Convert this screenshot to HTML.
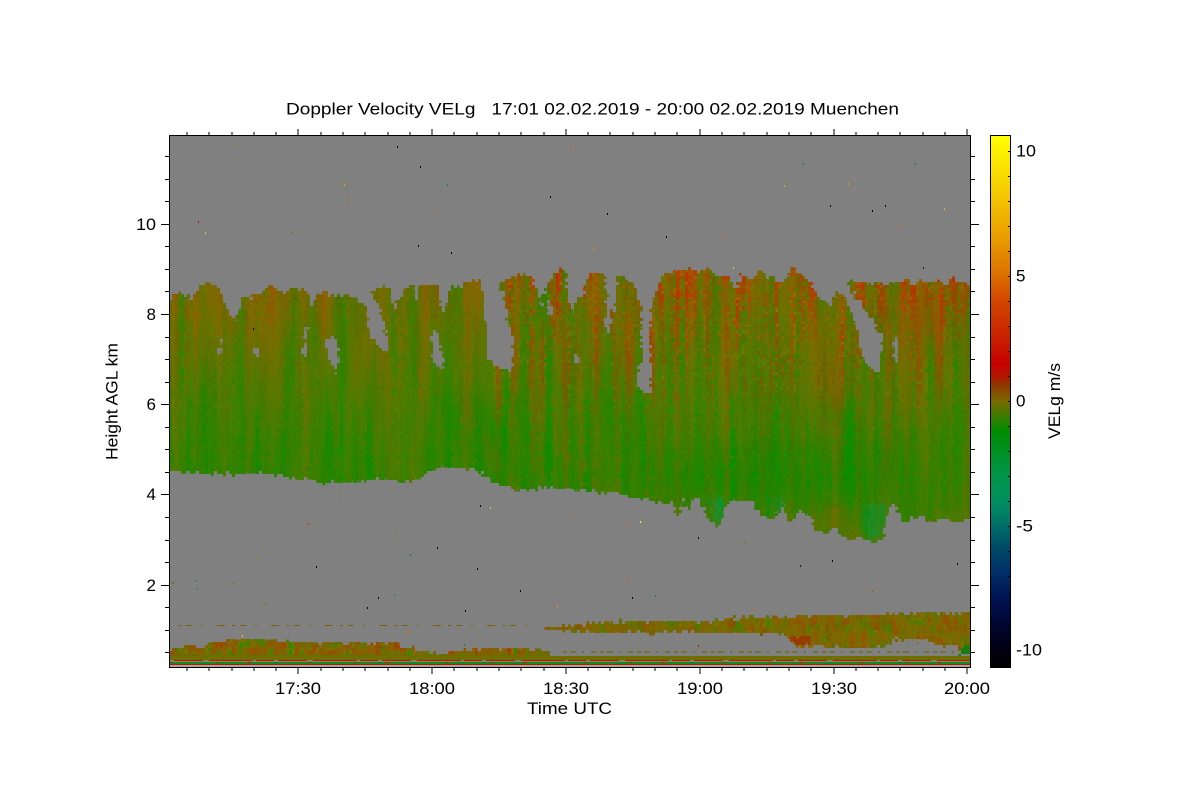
<!DOCTYPE html>
<html><head><meta charset="utf-8"><title>Doppler Velocity VELg</title>
<style>html,body{margin:0;padding:0;background:#fff;width:1200px;height:800px;overflow:hidden}svg{display:block}
text{font-family:"Liberation Sans",sans-serif;font-size:17px;fill:#000}</style></head>
<body>
<svg width="1200" height="800" viewBox="0 0 1200 800" xmlns="http://www.w3.org/2000/svg">
<defs>
<linearGradient id="base" gradientUnits="userSpaceOnUse" x1="0" y1="265" x2="0" y2="545">
<stop offset="0" stop-color="#846400"/><stop offset=".16" stop-color="#786c00"/><stop offset=".4" stop-color="#5e7800"/>
<stop offset=".62" stop-color="#448000"/><stop offset=".78" stop-color="#3e8000"/><stop offset=".9" stop-color="#587800"/><stop offset="1" stop-color="#6e7000"/>
</linearGradient>
<linearGradient id="topm" gradientUnits="userSpaceOnUse" x1="0" y1="270" x2="0" y2="520">
<stop offset="0" stop-color="#fff"/><stop offset=".3" stop-color="#999"/><stop offset=".6" stop-color="#333"/><stop offset="1" stop-color="#222"/>
</linearGradient>
<linearGradient id="botm" gradientUnits="userSpaceOnUse" x1="0" y1="270" x2="0" y2="520">
<stop offset="0" stop-color="#888"/><stop offset=".4" stop-color="#ccc"/><stop offset=".75" stop-color="#fff"/><stop offset="1" stop-color="#ddd"/>
</linearGradient>
<mask id="mt" maskUnits="userSpaceOnUse" x="160" y="135" width="820" height="533"><rect x="160" y="135" width="820" height="533" fill="url(#topm)"/></mask>
<mask id="mb" maskUnits="userSpaceOnUse" x="160" y="135" width="820" height="533"><rect x="160" y="135" width="820" height="533" fill="url(#botm)"/></mask>
<linearGradient id="cb" gradientUnits="userSpaceOnUse" x1="0" y1="135" x2="0" y2="667">
<stop offset="0" stop-color="#ffff00"/>
<stop offset=".113" stop-color="#f5c800"/>
<stop offset=".2" stop-color="#e89800"/>
<stop offset=".265" stop-color="#dc6e00"/>
<stop offset=".31" stop-color="#d24800"/>
<stop offset=".385" stop-color="#c81e00"/>
<stop offset=".43" stop-color="#c80000"/>
<stop offset=".455" stop-color="#b01800"/>
<stop offset=".47" stop-color="#903800"/>
<stop offset=".5" stop-color="#7a6a00"/>
<stop offset=".556" stop-color="#008c00"/>
<stop offset=".63" stop-color="#009440"/>
<stop offset=".688" stop-color="#009060"/>
<stop offset=".735" stop-color="#006e68"/>
<stop offset=".77" stop-color="#004e68"/>
<stop offset=".82" stop-color="#003068"/>
<stop offset=".875" stop-color="#001050"/>
<stop offset=".91" stop-color="#000838"/>
<stop offset=".97" stop-color="#000010"/>
<stop offset="1" stop-color="#000000"/>
</linearGradient>
<filter id="fg1" x="0" y="0" width="100%" height="100%" color-interpolation-filters="sRGB">
<feTurbulence type="fractalNoise" baseFrequency="0.11 0.005" numOctaves="3" seed="7"/>
<feColorMatrix values="0 0 0 0 0  0 0 0 0 .56  0 0 0 0 0  0 0 0 2.8 -1.05"/>
</filter>
<filter id="fg2" x="0" y="0" width="100%" height="100%" color-interpolation-filters="sRGB">
<feTurbulence type="fractalNoise" baseFrequency="0.03 0.004" numOctaves="2" seed="14"/>
<feColorMatrix values="0 0 0 0 0  0 0 0 0 .56  0 0 0 0 0  0 0 0 2.4 -1.0"/>
</filter>
<filter id="fr1" x="0" y="0" width="100%" height="100%" color-interpolation-filters="sRGB">
<feTurbulence type="fractalNoise" baseFrequency="0.2 0.006" numOctaves="3" seed="23"/>
<feColorMatrix values="0 0 0 0 .76  0 0 0 0 .16  0 0 0 0 0  0 0 0 3.4 -1.45"/>
</filter>
<filter id="fr2" x="0" y="0" width="100%" height="100%" color-interpolation-filters="sRGB">
<feTurbulence type="fractalNoise" baseFrequency="0.13 0.006" numOctaves="3" seed="41"/>
<feColorMatrix values="0 0 0 0 .56  0 0 0 0 .42  0 0 0 0 0  0 0 0 2.4 -1.0"/>
</filter>
<filter id="low" x="0" y="0" width="100%" height="100%" color-interpolation-filters="sRGB">
<feTurbulence type="fractalNoise" baseFrequency="0.16 0.06" numOctaves="3" seed="11"/>
<feColorMatrix values="0 0 0 0 .2  0 0 0 0 .52  0 0 0 0 0  0 0 0 4 -1.85"/>
</filter>
<filter id="low2" x="0" y="0" width="100%" height="100%" color-interpolation-filters="sRGB">
<feTurbulence type="fractalNoise" baseFrequency="0.16 0.06" numOctaves="3" seed="5"/>
<feColorMatrix values="0 0 0 0 .62  0 0 0 0 .26  0 0 0 0 0  0 0 0 4 -1.85"/>
</filter>
<filter id="rough" x="-2%" y="-2%" width="104%" height="104%" color-interpolation-filters="sRGB">
<feTurbulence type="fractalNoise" baseFrequency="0.22" numOctaves="2" seed="3" result="n"/>
<feDisplacementMap in="SourceGraphic" in2="n" scale="9" xChannelSelector="R" yChannelSelector="A"/>
</filter>
<filter id="px" filterUnits="userSpaceOnUse" x="169" y="135" width="803" height="534" color-interpolation-filters="sRGB">
<feComponentTransfer in="SourceGraphic" result="s"><feFuncA type="discrete" tableValues="0 1"/></feComponentTransfer>
<feFlood x="170" y="136" width="1" height="1" flood-color="#000"/>
<feComposite x="169" y="135" width="3" height="3"/>
<feTile result="a"/>
<feComposite in="s" in2="a" operator="in"/>
<feMorphology operator="dilate" radius="1"/>
</filter>
<filter id="bl" x="-30%" y="-30%" width="160%" height="160%"><feGaussianBlur stdDeviation="14"/></filter>
<filter id="bl5" x="-30%" y="-30%" width="160%" height="160%"><feGaussianBlur stdDeviation="5"/></filter>
<filter id="bl3" x="-30%" y="-30%" width="160%" height="160%"><feGaussianBlur stdDeviation="2.5"/></filter>
<clipPath id="plot"><rect x="170" y="136" width="800" height="531"/></clipPath>
<clipPath id="cl"><polygon points="160,302 170,302 173,297 183,293 190,301 201,285 207,283 220,288 225,303 232,320 237,320 243,297 250,299 257,293 262,296 267,285 277,290 284,294 290,291 294,287 300,291 307,290 313,307 317,293 327,293 333,297 343,295 353,295 360,303 365,307 367,325 373,340 383,350 390,350 385,327 378,305 372,293 383,285 390,290 393,317 397,300 407,288 413,283 417,303 420,287 425,283 437,285 440,310 445,312 448,300 450,285 460,288 465,285 475,277 482,290 485,315 487,360 500,367 512,372 514,340 505,300 500,283 510,278 520,275 530,275 537,290 541,310 545,290 550,280 560,270 565,270 568,293 573,317 575,297 582,298 585,283 590,274 598,273 605,277 607,297 610,303 615,313 617,277 623,275 628,283 633,283 640,303 642,363 637,367 638,387 645,393 651,393 652,367 650,327 655,293 663,275 677,272 690,268 700,272 710,268 717,277 727,277 737,290 742,275 752,280 760,270 767,280 773,277 782,285 793,270 807,278 818,297 827,303 832,310 837,292 845,297 853,317 860,343 865,365 880,372 883,337 868,312 853,293 845,278 855,283 863,281 870,285 876,280 882,287 888,281 897,284 907,280 915,286 920,279 928,284 937,280 945,285 953,279 962,284 985,281 985,523 965,518 952,523 948,517 927,522 922,515 903,523 898,507 890,505 885,523 882,540 872,542 860,537 847,540 833,527 827,532 813,532 813,520 797,508 793,522 787,520 783,500 775,520 767,517 760,513 753,500 737,500 730,500 718,527 707,517 702,500 692,498 687,512 683,498 677,517 673,503 657,502 640,497 603,492 560,488 520,490 493,482 480,472 473,470 447,466 427,470 420,477 410,482 373,477 360,482 320,482 293,477 260,473 203,473 170,471 160,471"/></clipPath>
<clipPath id="lowL"><polygon points="160,648 170,648 200,647 220,642 250,639 293,642 347,643 393,643 407,647 423,652 443,655 467,650 493,649 527,649 550,652 553,657 553,660 160,660"/></clipPath>
<clipPath id="lowR"><polygon points="543,629 560,627 593,623 627,622 660,621 710,622 753,617 793,617 837,616 877,615 917,613 985,614 985,655 960,655 958,647 927,643 893,642 873,648 860,647 827,647 793,645 790,638 780,633 747,633 713,633 687,631 643,632 603,632 560,631"/></clipPath>
</defs>
<rect width="1200" height="800" fill="#fff"/>
<rect x="170" y="136" width="800" height="531" fill="#808080"/>
<g clip-path="url(#plot)">
<g filter="url(#px)">
<g filter="url(#rough)">
<g clip-path="url(#cl)">
<rect x="160" y="260" width="825" height="290" fill="url(#base)"/>
<ellipse cx="770" cy="478" rx="130" ry="26" fill="#0c8c00" opacity=".75" filter="url(#bl)"/>
<ellipse cx="625" cy="440" rx="30" ry="70" fill="#088c00" opacity=".45" filter="url(#bl)"/>
<ellipse cx="500" cy="455" rx="30" ry="40" fill="#0a8c00" opacity=".5" filter="url(#bl)"/>
<ellipse cx="205" cy="415" rx="18" ry="50" fill="#0a8c00" opacity=".4" filter="url(#bl)"/>
<ellipse cx="910" cy="320" rx="60" ry="30" fill="#a04800" opacity=".35" filter="url(#bl)"/>
<ellipse cx="860" cy="400" rx="70" ry="30" fill="#806800" opacity=".4" filter="url(#bl)"/>
<path d="M443 393L477 460M470 395L520 480M505 390L560 480M600 395L650 470M820 400L900 470" stroke="#0a8c00" stroke-width="12" fill="none" opacity=".4" filter="url(#bl5)"/>
<path d="M458 395L500 470M535 400L585 480" stroke="#7a6800" stroke-width="10" fill="none" opacity=".5" filter="url(#bl5)"/>
<polygon points="706,498 727,497 725,515 719,527 712,520 708,510" fill="#0a9430" filter="url(#bl3)"/>
<polygon points="860,505 886,503 884,525 880,540 870,540 862,525" fill="#0a9430" filter="url(#bl3)"/>
<polygon points="765,498 785,497 780,518 770,518" fill="#0a9020" opacity=".8" filter="url(#bl3)"/>
<polygon points="825,505 848,505 846,530 830,528" fill="#8a6200" opacity=".6" filter="url(#bl3)"/>
<rect x="160" y="260" width="825" height="290" filter="url(#fg2)" opacity=".6"/>
<rect x="160" y="260" width="825" height="290" filter="url(#fg1)" mask="url(#mb)" opacity=".75"/>
<g mask="url(#mt)">
<rect x="160" y="260" width="330" height="290" filter="url(#fr1)" opacity=".35"/>
<rect x="490" y="260" width="495" height="290" filter="url(#fr1)"/>
</g>
<rect x="160" y="260" width="825" height="290" filter="url(#fr2)" opacity=".45"/>
</g>
<polygon points="575,353 578,353 578,363 575,363" fill="#808080"/>
<polygon points="893,340 898,338 897,363 894,360" fill="#808080"/>
<polygon points="218,340 221,340 220,354 218,352" fill="#808080"/>
<polygon points="254,347 260,348 258,358 254,356" fill="#808080"/>
<polygon points="303,345 306,346 305,360 303,358" fill="#808080"/>
<polygon points="326,340 332,336 334,358 328,360" fill="#808080"/>
<polygon points="305,325 307,325 307,338 305,336" fill="#808080"/>
<polygon points="332,335 338,340 336,372 330,360" fill="#808080"/>
<polygon points="431,332 438,331 440,350 444,368 436,367 433,352" fill="#808080"/>
<polygon points="548,298 552,298 550,320" fill="#808080"/>
<polygon points="606,302 610,302 610,330 606,335" fill="#808080"/>
</g>
<g filter="url(#rough)">
<g clip-path="url(#lowL)">
<rect x="160" y="636" width="400" height="26" fill="#826200"/>
<rect x="160" y="636" width="400" height="26" filter="url(#low)"/>
<rect x="160" y="636" width="400" height="26" filter="url(#low2)"/>
</g>
<g clip-path="url(#lowR)">
<rect x="540" y="612" width="445" height="46" fill="#7c6800"/>
<rect x="540" y="612" width="445" height="46" filter="url(#low)" opacity=".75"/>
<rect x="540" y="612" width="445" height="46" filter="url(#low2)" opacity=".65"/>
<rect x="960" y="645" width="11" height="11" fill="#1c7c10"/>
<rect x="892" y="640" width="36" height="3" fill="#808080"/>
<rect x="790" y="636" width="22" height="9" fill="#963c00"/>
</g>
</g>
</g>
<rect x="170" y="656" width="800" height="4" fill="#706e00"/>
<rect x="170" y="654" width="380" height="2" fill="#6e6c00" opacity=".7"/>
<rect x="170" y="660" width="800" height="1" fill="#c01800"/>
<rect x="170" y="661" width="800" height="1" fill="#8c8660"/>
<rect x="170" y="662" width="800" height="2" fill="#108a28"/>
<rect x="170" y="664" width="800" height="1" fill="#b81c00"/>
<rect x="170" y="665" width="800" height="2" fill="#a4a4a0"/>
<line x1="170" y1="662.5" x2="970" y2="662.5" stroke="#b81c00" stroke-width="1" stroke-dasharray="3 43 2 29 4 57"/>
<line x1="170" y1="660.5" x2="970" y2="660.5" stroke="#808080" stroke-width="1" stroke-dasharray="4 29 6 44 3 18"/>
<line x1="178" y1="625.5" x2="540" y2="625.5" stroke="#7a6200" stroke-width="1" stroke-dasharray="3 5 6 9 2 14 8 7"/>
<line x1="563" y1="652" x2="960" y2="652" stroke="#6c6a00" stroke-width="1.2" stroke-dasharray="4 3 6 6 2 7 5 4"/>
<g shape-rendering="crispEdges">
<rect x="198" y="221" width="1" height="2" fill="#c00"/><rect x="205" y="232" width="1" height="2" fill="#ec0"/>
<rect x="236" y="145" width="1" height="2" fill="#b90"/><rect x="292" y="232" width="1" height="2" fill="#860"/>
<rect x="344" y="184" width="1" height="2" fill="#e90"/><rect x="348" y="199" width="1" height="2" fill="#a50"/>
<rect x="420" y="166" width="1" height="2" fill="#000"/><rect x="437" y="210" width="1" height="2" fill="#d70"/>
<rect x="447" y="184" width="1" height="2" fill="#086"/><rect x="397" y="146" width="1" height="2" fill="#000"/>
<rect x="418" y="245" width="1" height="2" fill="#000"/><rect x="451" y="252" width="1" height="2" fill="#000"/>
<rect x="550" y="196" width="1" height="2" fill="#000"/><rect x="573" y="146" width="1" height="2" fill="#e80"/>
<rect x="593" y="248" width="1" height="2" fill="#e80"/><rect x="607" y="213" width="1" height="2" fill="#001"/>
<rect x="666" y="236" width="1" height="2" fill="#000"/><rect x="722" y="235" width="1" height="2" fill="#d60"/>
<rect x="733" y="267" width="1" height="2" fill="#ec0"/><rect x="784" y="185" width="1" height="2" fill="#da0"/>
<rect x="830" y="205" width="1" height="2" fill="#000"/><rect x="848" y="183" width="1" height="2" fill="#e90"/>
<rect x="872" y="210" width="1" height="2" fill="#000"/><rect x="885" y="205" width="1" height="2" fill="#000"/>
<rect x="900" y="225" width="1" height="2" fill="#d60"/><rect x="915" y="163" width="1" height="2" fill="#076"/>
<rect x="803" y="163" width="1" height="2" fill="#076"/><rect x="944" y="208" width="1" height="2" fill="#eb0"/>
<rect x="923" y="267" width="1" height="2" fill="#024"/><rect x="253" y="328" width="1" height="2" fill="#000"/>
<rect x="340" y="495" width="1" height="2" fill="#860"/><rect x="308" y="523" width="1" height="2" fill="#c30"/>
<rect x="395" y="533" width="1" height="2" fill="#a70"/><rect x="437" y="547" width="1" height="2" fill="#000"/>
<rect x="480" y="505" width="1" height="2" fill="#000"/><rect x="490" y="507" width="1" height="2" fill="#ec0"/>
<rect x="640" y="521" width="1" height="2" fill="#ff0"/><rect x="626" y="524" width="1" height="2" fill="#d60"/>
<rect x="573" y="515" width="1" height="2" fill="#d80"/><rect x="257" y="557" width="1" height="2" fill="#a70"/>
<rect x="195" y="580" width="1" height="2" fill="#086"/><rect x="197" y="588" width="1" height="2" fill="#086"/>
<rect x="233" y="582" width="1" height="2" fill="#670"/><rect x="172" y="582" width="2" height="2" fill="#770"/>
<rect x="265" y="603" width="1" height="2" fill="#860"/><rect x="316" y="566" width="1" height="2" fill="#000"/>
<rect x="367" y="607" width="1" height="2" fill="#000"/><rect x="378" y="597" width="1" height="2" fill="#000"/>
<rect x="394" y="594" width="1" height="2" fill="#086"/><rect x="410" y="554" width="1" height="2" fill="#076"/>
<rect x="465" y="610" width="1" height="2" fill="#000"/><rect x="477" y="568" width="1" height="2" fill="#000"/>
<rect x="520" y="590" width="1" height="2" fill="#000"/><rect x="557" y="605" width="1" height="2" fill="#e90"/>
<rect x="632" y="597" width="1" height="2" fill="#000"/><rect x="628" y="578" width="1" height="2" fill="#d50"/>
<rect x="655" y="595" width="1" height="2" fill="#086"/><rect x="698" y="537" width="1" height="2" fill="#000"/>
<rect x="832" y="560" width="1" height="2" fill="#000"/><rect x="872" y="590" width="1" height="2" fill="#a50"/>
<rect x="957" y="563" width="1" height="2" fill="#000"/><rect x="745" y="542" width="1" height="2" fill="#860"/>
<rect x="800" y="565" width="1" height="2" fill="#024"/><rect x="752" y="608" width="1" height="2" fill="#d60"/>
<rect x="242" y="635" width="1" height="2" fill="#ec0"/><rect x="408" y="631" width="2" height="2" fill="#d60"/>
<rect x="464" y="644" width="1" height="2" fill="#084"/><rect x="698" y="645" width="1" height="2" fill="#c00"/>
</g>
</g>
<g fill="none" stroke="#000" stroke-width="1" shape-rendering="crispEdges">
<rect x="169.5" y="135.5" width="801" height="532"/>
<path d="M187 135v-3M209 135v-3M232 135v-3M254 135v-3M276 135v-3M298 135v-6M321 135v-3M343 135v-3M365 135v-3M388 135v-3M410 135v-3M432 135v-6M454 135v-3M477 135v-3M499 135v-3M521 135v-3M544 135v-3M566 135v-6M588 135v-3M610 135v-3M633 135v-3M655 135v-3M677 135v-3M700 135v-6M722 135v-3M744 135v-3M767 135v-3M789 135v-3M811 135v-3M834 135v-6M856 135v-3M878 135v-3M900 135v-3M923 135v-3M945 135v-3M967 135v-6"/>
<path d="M187 668v3M209 668v3M232 668v3M254 668v3M276 668v3M298 668v6M321 668v3M343 668v3M365 668v3M388 668v3M410 668v3M432 668v6M454 668v3M477 668v3M499 668v3M521 668v3M544 668v3M566 668v6M588 668v3M610 668v3M633 668v3M655 668v3M677 668v3M700 668v6M722 668v3M744 668v3M767 668v3M789 668v3M811 668v3M834 668v6M856 668v3M878 668v3M900 668v3M923 668v3M945 668v3M967 668v6"/>
<path d="M169 156.5h-4M169 179.5h-4M169 201.5h-4M169 224.5h-8M169 246.5h-4M169 269.5h-4M169 291.5h-4M169 314.5h-8M169 337.5h-4M169 359.5h-4M169 382.5h-4M169 404.5h-8M169 427.5h-4M169 449.5h-4M169 472.5h-4M169 494.5h-8M169 517.5h-4M169 540.5h-4M169 562.5h-4M169 585.5h-8M169 607.5h-4M169 630.5h-4M169 652.5h-4"/>
<path d="M971 156.5h4M971 179.5h4M971 201.5h4M971 224.5h8M971 246.5h4M971 269.5h4M971 291.5h4M971 314.5h8M971 337.5h4M971 359.5h4M971 382.5h4M971 404.5h8M971 427.5h4M971 449.5h4M971 472.5h4M971 494.5h8M971 517.5h4M971 540.5h4M971 562.5h4M971 585.5h8M971 607.5h4M971 630.5h4M971 652.5h4"/>
</g>
<rect x="990" y="135" width="21" height="533" fill="url(#cb)"/>
<g fill="none" stroke="#000" stroke-width="1" shape-rendering="crispEdges">
<rect x="990.5" y="135.5" width="20" height="532"/>
<path d="M1010 151.5h-2M1010 176.5h-2M1010 201.5h-2M1010 226.5h-2M1010 251.5h-2M1010 276.5h-2M1010 301.5h-2M1010 326.5h-2M1010 351.5h-2M1010 376.5h-2M1010 401.5h-2M1010 426.5h-2M1010 451.5h-2M1010 476.5h-2M1010 501.5h-2M1010 526.5h-2M1010 551.5h-2M1010 576.5h-2M1010 601.5h-2M1010 626.5h-2M1010 651.5h-2"/>
</g>
<text x="286" y="114.5" textLength="613" lengthAdjust="spacingAndGlyphs" xml:space="preserve" style="white-space:pre">Doppler Velocity VELg   17:01 02.02.2019 - 20:00 02.02.2019 Muenchen</text>
<text x="136" y="229.8" textLength="20" lengthAdjust="spacingAndGlyphs">10</text>
<text x="156" y="320" text-anchor="end">8</text>
<text x="156" y="410" text-anchor="end">6</text>
<text x="156" y="500" text-anchor="end">4</text>
<text x="156" y="591" text-anchor="end">2</text>
<text x="275" y="694" textLength="46" lengthAdjust="spacingAndGlyphs">17:30</text>
<text x="409" y="694" textLength="46" lengthAdjust="spacingAndGlyphs">18:00</text>
<text x="543" y="694" textLength="46" lengthAdjust="spacingAndGlyphs">18:30</text>
<text x="677" y="694" textLength="46" lengthAdjust="spacingAndGlyphs">19:00</text>
<text x="811" y="694" textLength="46" lengthAdjust="spacingAndGlyphs">19:30</text>
<text x="944" y="694" textLength="46" lengthAdjust="spacingAndGlyphs">20:00</text>
<text x="527" y="714" textLength="85" lengthAdjust="spacingAndGlyphs">Time UTC</text>
<text transform="translate(117.5 460) rotate(-90)" textLength="117" lengthAdjust="spacingAndGlyphs">Height AGL km</text>
<text transform="translate(1060 439) rotate(-90)" textLength="76" lengthAdjust="spacingAndGlyphs">VELg m/s</text>
<text x="1016" y="156.7" textLength="20" lengthAdjust="spacingAndGlyphs">10</text>
<text x="1016" y="281.7">5</text>
<text x="1016" y="406.7">0</text>
<text x="1016" y="531.7" textLength="17" lengthAdjust="spacingAndGlyphs">-5</text>
<text x="1016" y="655.7" textLength="26" lengthAdjust="spacingAndGlyphs">-10</text>
</svg>
</body></html>
